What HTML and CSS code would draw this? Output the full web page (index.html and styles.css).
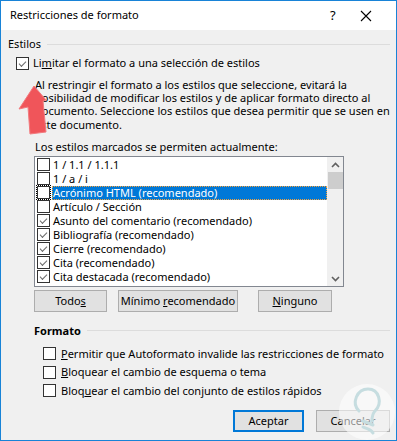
FILE: index.html
```html
<!DOCTYPE html>
<html>
<head>
  <meta charset="utf-8">
  <title>Restricciones de formato</title>
  <link rel="stylesheet" href="styles.css">
</head>
<body>
<div class="ventana">

<div class="titulo">
  <div class="titulo_texto">Restricciones de formato</div>
  <div class="titulo_ayuda">?</div>
  <div class="titulo_cerrar">
    <svg width="12" height="12" viewBox="0 0 12 12"><path d="M1 1 L11 11 M11 1 L1 11" stroke="#000" stroke-width="1.1" fill="none"/></svg>
  </div>
</div>

<div class="contenido">

<div class="grupo"><span>Estilos</span><div class="linea"></div></div>

<div class="fila_check limitar">
  <span class="check marcado"></span>
  <span>Li<u>m</u>itar el formato a una selección de estilos</span>
</div>

<div class="explicacion">
Al restringir el formato a los estilos que seleccione, evitará la<br>
posibilidad de modificar los estilos y de aplicar formato directo al<br>
documento. Seleccione los estilos que desea permitir que se usen en<br>
este documento.
</div>

<div class="etiqueta_lista">Los estilos marcados se permiten actualmente:</div>

<div class="lista">
  <div class="lista_items">
    <div class="item"><span class="check"></span><span class="item_texto">1 / 1.1 / 1.1.1</span></div>
    <div class="item"><span class="check"></span><span class="item_texto">1 / a / i</span></div>
    <div class="item activo"><span class="check foco"></span><span class="item_texto">Acrónimo HTML (recomendado)</span></div>
    <div class="item"><span class="check"></span><span class="item_texto">Artículo / Sección</span></div>
    <div class="item"><span class="check marcado"></span><span class="item_texto">Asunto del comentario (recomendado)</span></div>
    <div class="item"><span class="check marcado"></span><span class="item_texto">Bibliografía (recomendado)</span></div>
    <div class="item"><span class="check marcado"></span><span class="item_texto">Cierre (recomendado)</span></div>
    <div class="item"><span class="check marcado"></span><span class="item_texto">Cita (recomendado)</span></div>
    <div class="item"><span class="check marcado"></span><span class="item_texto">Cita destacada (recomendado)</span></div>
  </div>
  <div class="barra">
    <svg class="flecha" width="9" height="6" viewBox="0 0 9 6"><path d="M1 5 L4.5 1.5 L8 5" stroke="#606060" stroke-width="1.6" fill="none"/></svg>
    <div class="barra_pulgar"></div>
    <div class="barra_hueco"></div>
    <svg class="flecha" width="9" height="6" viewBox="0 0 9 6"><path d="M1 1 L4.5 4.5 L8 1" stroke="#606060" stroke-width="1.6" fill="none"/></svg>
  </div>
</div>

<div class="botones_lista">
  <div class="boton b_todos"><span>Todo<u>s</u></span></div>
  <div class="boton b_minimo"><span>Mínimo <u>r</u>ecomendado</span></div>
  <div class="boton b_ninguno"><span><u>N</u>inguno</span></div>
</div>

<div class="grupo formato"><span class="negrita">Formato</span><div class="linea"></div></div>

<div class="opciones">
  <div class="fila_check"><span class="check"></span><span><u>P</u>ermitir que Autoformato invalide las restricciones de formato</span></div>
  <div class="fila_check"><span class="check"></span><span><u>B</u>loquear el cambio de esquema o tema</span></div>
  <div class="fila_check"><span class="check"></span><span>Bloq<u>u</u>ear el cambio del conjunto de estilos rápidos</span></div>
</div>

<div class="botones_final">
  <div class="boton b_aceptar"><span>Aceptar</span></div>
  <div class="boton b_cancelar"><span>Cancelar</span></div>
</div>

</div>

<!-- flecha roja encima del texto -->
<svg class="flecha_roja" width="40" height="60" viewBox="0 0 40 60">
  <polygon points="19,5 4,28 13,26 15,53 31,51 28,20 31,19" fill="#f0555a" stroke="#f27a7e" stroke-width="1"/>
</svg>

<!-- marca de agua -->
<div class="marca">
  <svg width="60" height="62" viewBox="0 0 60 62">
    <circle cx="30" cy="31" r="28" fill="#ffffff" fill-opacity="0.55"/>
    <path d="M22 30 C14 22 20 8 31 8 C42 8 46 22 38 30 C35 33 35 36 35 40 M26 40 L36 44 M26 46 C30 48 34 48 36 52" stroke="#c6dde0" stroke-width="3" fill="none" stroke-linecap="round"/>
  </svg>
</div>

</div>
</body>
</html>
```

FILE: styles.css
```css
body { margin:0px; padding:0px; font-family:"Noto Sans", sans-serif; font-size:11px; color:#000; }
u { text-decoration:underline; text-underline-offset:1px; }

.ventana { position:relative; width:397px; height:441px; box-sizing:border-box;
  border:1px solid #1883d7; background:#f0f0f0; overflow:hidden; white-space:nowrap; }

/* barra de titulo */
.titulo { display:flex; align-items:center; height:29px; background:#fff; }
.titulo_texto { flex:1; padding-left:9px; font-size:11px; padding-bottom:2px; }
.titulo_ayuda { width:20px; font-size:13px; padding-bottom:2px; }
.titulo_cerrar { width:36px; padding-left:10px; display:flex; align-items:center; }

.contenido { padding:0px 6px 0px 7px; }

/* cabecera de grupo con linea */
.grupo { display:flex; align-items:center; height:14px; margin-top:7px; line-height:14px; }
.grupo .linea { flex:1; height:1px; background:#dcdcdc; margin-left:6px; }
.negrita { font-weight:bold; }

/* casillas */
.check { display:inline-block; width:11px; height:11px; border:1px solid #333; background:#fff;
  flex:none; position:relative; }
.check.marcado::after { content:""; position:absolute; left:2px; top:0px; width:6px; height:3px;
  border-left:1.5px solid #6a6a6a; border-bottom:1.5px solid #6a6a6a; transform:translate(0px,3px) rotate(-45deg); }
.check.foco { outline:1px dotted #000; outline-offset:0px; }

.fila_check { display:flex; align-items:center; height:14px; line-height:14px; }
.fila_check .check { margin-right:4px; }
.limitar { margin-top:5px; padding-left:8px; }

.explicacion { margin-top:8px; padding-left:27px; line-height:13.2px; }
.etiqueta_lista { margin-top:9px; padding-left:27px; line-height:14px; }

/* lista de estilos */
.lista { display:flex; margin:2px 0px 0px 26px; width:310px; height:131px; box-sizing:border-box;
  border:1px solid #828790; background:#fff; }
.lista_items { flex:1; padding-top:1px; }
.item { display:flex; align-items:center; height:14px; line-height:14px; padding-left:2px; }
.item .check { margin-right:2px; }
.item_texto { flex:1; padding-left:1px; }
.item.activo .item_texto { background:#0078d7; color:#fff; outline:1px dotted #f7a23b; outline-offset:-1px; }
.barra { width:16px; display:flex; flex-direction:column; align-items:center; background:#f0f0f0; }
.barra .flecha { margin:5px 0px 4px 0px; }
.barra_pulgar { width:15px; height:17px; background:#cdcdcd; }
.barra_hueco { flex:1; }

/* botones */
.boton { display:flex; align-items:center; justify-content:center; box-sizing:border-box;
  height:22px; background:#e1e1e1; border:1px solid #adadad; }
.botones_lista { display:flex; margin:3px 0px 0px 26px; }
.b_todos { width:73px; }
.b_minimo { width:120px; margin-left:11px; }
.b_ninguno { width:74px; margin-left:20px; }

.formato { margin-top:12px; padding-left:26px; }

.opciones { margin-top:9px; padding-left:35px; }
.opciones .fila_check { margin-bottom:4.5px; }
.opciones .check { margin-right:5px; }

.botones_final { display:flex; justify-content:flex-end; margin-top:12px; padding-right:0px; }
.b_aceptar { width:71px; border:2px solid #0078d7; margin-right:12px; }
.b_cancelar { width:74px; }

.flecha_roja { position:absolute; left:14px; top:80px; }
.marca { position:absolute; left:336px; top:380px; }
```
